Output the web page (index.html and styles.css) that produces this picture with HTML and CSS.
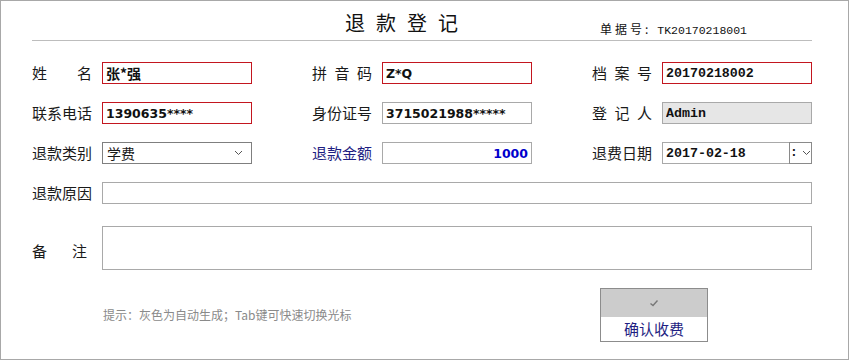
FILE: index.html
```html
<!DOCTYPE html>
<html lang="zh-CN">
<head>
    <meta charset="UTF-8">
    <title>退款登记</title>
    <link rel="stylesheet" href="styles.css">
</head>
<body>
    <div class="page">
        <div class="header">
            <h1 class="title">退款登记</h1>
            <div class="ticket"><span class="ticket-label">单据号:</span><span class="ticket-no">TK20170218001</span></div>
        </div>
        <div class="form">
            <div class="row">
                <div class="field">
                    <label class="label">姓 名</label>
                    <input class="input required value-cn" value="张*强">
                </div>
                <div class="field">
                    <label class="label">拼 音 码</label>
                    <input class="input required value-sans" value="Z*Q">
                </div>
                <div class="field">
                    <label class="label">档 案 号</label>
                    <input class="input required value-mono" value="20170218002">
                </div>
            </div>
            <div class="row">
                <div class="field">
                    <label class="label">联系电话</label>
                    <input class="input required value-sans" value="1390635****">
                </div>
                <div class="field">
                    <label class="label">身份证号</label>
                    <input class="input value-sans" value="3715021988*****">
                </div>
                <div class="field">
                    <label class="label">登 记 人</label>
                    <input class="input auto value-mono" value="Admin" readonly>
                </div>
            </div>
            <div class="row">
                <div class="field">
                    <label class="label">退款类别</label>
                    <div class="select">
                        <span>学费</span>
                        <svg class="chevron" width="9" height="6" viewBox="0 0 9 6"><polyline points="1,1 4.5,4.5 8,1" fill="none" stroke="#555" stroke-width="1"/></svg>
                    </div>
                </div>
                <div class="field">
                    <label class="label label-blue">退款金额</label>
                    <input class="input value-sans amount" value="1000">
                </div>
                <div class="field">
                    <label class="label">退费日期</label>
                    <div class="date-group">
                        <input class="input date value-mono" value="2017-02-18">
                        <div class="spinner">
                            <span class="colon">:</span>
                            <svg width="9" height="6" viewBox="0 0 9 6"><polyline points="1,1 4.5,4.5 8,1" fill="none" stroke="#555" stroke-width="1"/></svg>
                        </div>
                    </div>
                </div>
            </div>
            <div class="row row-wide">
                <label class="label">退款原因</label>
                <input class="input wide">
            </div>
            <div class="row row-note">
                <label class="label label-short">备 注</label>
                <textarea class="note"></textarea>
            </div>
            <div class="footer">
                <div class="hint">提示：灰色为自动生成；Tab键可快速切换光标</div>
                <div class="confirm">
                    <div class="confirm-icon">
                        <svg width="10" height="8" viewBox="0 0 10 8"><polyline points="1.5,4.5 4,6.5 8.5,1.5" fill="none" stroke="#777" stroke-width="1.4"/></svg>
                    </div>
                    <div class="confirm-text">确认收费</div>
                </div>
            </div>
        </div>
    </div>
</body>
</html>
```

FILE: styles.css
```css
body {
    margin: 0;
    background: #fff;
    font-family: "Noto Sans CJK SC", sans-serif;
    color: #1a1a1a;
}
.page {
    box-sizing: border-box;
    width: 849px;
    height: 360px;
    border: 1px solid #a8a8a8;
    padding: 0 36px 0 31px;
}
.header {
    display: flex;
    align-items: flex-end;
    height: 39px;
    border-bottom: 1px solid #bdbdbd;
}
.title {
    margin: 0 0 0 313px;
    padding-bottom: 7px;
    font-size: 20px;
    line-height: 20px;
    font-weight: normal;
    letter-spacing: 11px;
    color: #111;
}
.ticket {
    margin-left: auto;
    margin-right: 65px;
    padding-bottom: 2px;
    font-size: 12px;
    line-height: 14px;
    color: #111;
}
.ticket-label {
    letter-spacing: 3px;
}
.ticket-no {
    margin-left: 6px;
    font-family: "Liberation Mono", monospace;
    font-size: 11.5px;
}
.form {
    margin-top: 21px;
}
.row {
    display: flex;
    gap: 60px;
    height: 22px;
    margin-bottom: 18px;
}
.field {
    display: flex;
    align-items: center;
}
.label {
    width: 60px;
    margin-right: 10px;
    font-size: 15px;
    line-height: 22px;
    text-align: justify;
    text-align-last: justify;
    white-space: nowrap;
}
.label-blue {
    color: #1e1e82;
}
.label-short {
    width: 55px;
    margin-right: 15px;
}
.input {
    box-sizing: border-box;
    width: 150px;
    height: 22px;
    margin: 0;
    padding: 0 3px;
    border: 1px solid #a9a9a9;
    border-radius: 0;
    outline: none;
    background: #fff;
    color: #111;
}
.input.required {
    border-color: #c3161f;
}
.input.auto {
    background: #e6e6e6;
}
.value-cn {
    font-family: "Noto Sans CJK SC", sans-serif;
    font-size: 14px;
    font-weight: bold;
}
.value-sans {
    font-family: "DejaVu Sans", sans-serif;
    font-size: 12.5px;
    font-weight: bold;
}
.value-mono {
    font-family: "Liberation Mono", monospace;
    font-size: 13.3px;
    font-weight: bold;
}
.amount {
    text-align: right;
    color: #0000cc;
}
.select {
    box-sizing: border-box;
    display: flex;
    align-items: center;
    justify-content: space-between;
    width: 150px;
    height: 22px;
    padding: 0 8px 0 4px;
    border: 1px solid #7f7f7f;
    font-size: 14px;
    line-height: 20px;
}
.date-group {
    display: flex;
    width: 150px;
}
.input.date {
    width: 128px;
}
.spinner {
    box-sizing: border-box;
    display: flex;
    align-items: center;
    gap: 4px;
    width: 23px;
    height: 22px;
    margin-left: -1px;
    border: 1px solid #8a8a8a;
    overflow: hidden;
}
.colon {
    margin-left: 0;
    font-family: "Liberation Mono", monospace;
    font-size: 13px;
    font-weight: bold;
    line-height: 20px;
}
.row-wide {
    gap: 0;
    margin-bottom: 22px;
}
.input.wide {
    flex: 1;
    width: auto;
}
.row-note {
    gap: 0;
    align-items: center;
    height: 44px;
}
.row-note .label {
    margin-top: 6px;
}
.note {
    box-sizing: border-box;
    width: 711px;
    height: 44px;
    margin: 0;
    border: 1px solid #a9a9a9;
    resize: none;
    outline: none;
}
.footer {
    display: flex;
    align-items: center;
    margin-top: 18px;
}
.hint {
    margin-left: 71px;
    font-size: 12px;
    line-height: 16px;
    color: #8a8a8a;
}
.confirm {
    box-sizing: border-box;
    width: 108px;
    height: 54px;
    margin-left: auto;
    margin-right: 104px;
    border: 1px solid #8c8c8c;
    background: #fff;
}
.confirm-icon {
    display: flex;
    align-items: center;
    justify-content: center;
    height: 28px;
    background: #cccccc;
}
.confirm-text {
    font-size: 15px;
    line-height: 24px;
    text-align: center;
    color: #1e1e82;
}
```
